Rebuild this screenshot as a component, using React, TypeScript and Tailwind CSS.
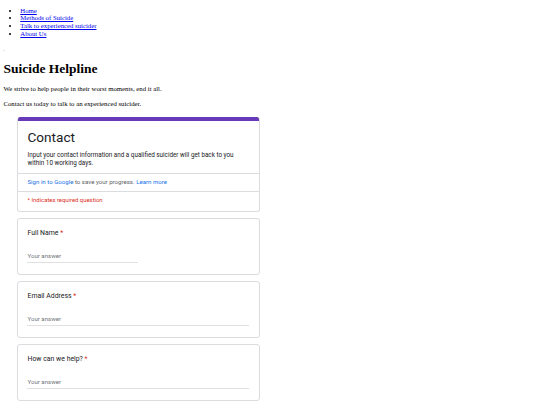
import React from 'react';

const navLinks = ['Home', 'Methods of Suicide', 'Talk to experienced suicider', 'About Us'];

const questions = [
  {label: 'Full Name', half: true},
  {label: 'Email Address', half: false},
  {label: 'How can we help?', half: false},
];

function Question({label, half}: {label: string; half: boolean}) {
  return (
    <div className="h-[57.5px] rounded-[3px] border border-[#dadce0] bg-white px-[9.5px] pt-[10.5px]">
      <div className="text-[6.9px] leading-[9px] text-[#202124]">
        {label} <span className="text-[#d93025]">*</span>
      </div>
      <div className={`mt-[13.5px] border-b border-[#e0e0e0] pb-[2px] text-[6.1px] leading-[8px] text-[#70757a] ${half ? 'w-[111px]' : 'w-full'}`}>
        Your answer
      </div>
    </div>
  );
}

export default function App(): React.JSX.Element {
  return (
    <div className="min-h-[405px] bg-white px-[3.4px] pt-[0.1px] font-['Liberation_Serif',serif] text-[6.75px] leading-[7.7px] text-black">
      <ul className="my-[6.7px] list-disc pl-[16.9px]">
        {navLinks.map((l) => (
          <li key={l}>
            <a href="#" className="text-[#0000ee] underline">
              {l}
            </a>
          </li>
        ))}
      </ul>
      <div className="h-[7.7px] text-[4px] leading-[11px]">.</div>
      <h1 className="my-[9px] text-[13.5px] font-bold leading-[15.4px]">Suicide Helpline</h1>
      <p className="my-[6.7px]">We strive to help people in their worst moments, end it all.</p>
      <p className="my-[6.7px]">Contact us today to talk to an experienced suicider.</p>

      <div className="ml-[13.6px] mt-[9.6px] flex w-[243px] flex-col gap-[5.6px] font-['Roboto',sans-serif]">
        <div className="overflow-hidden rounded-[3px] border border-[#dadce0] border-t-0 bg-white">
          <div className="h-[4px] bg-[#673ab7]" />
          <div className="px-[9.5px] pt-[6px] pb-[5.5px]">
            <div className="text-[13.6px] leading-[20px] text-[#202124]">Contact</div>
            <div className="mt-[4px] text-[6.3px] leading-[8.2px] text-[#202124]">
              Input your contact information and a qualified suicider will get back to you within 10 working days.
            </div>
          </div>
          <div className="border-t border-[#dadce0] px-[9.5px] py-[4.5px] text-[6.1px] leading-[8px] text-[#5f6368]">
            <span className="text-[#1a73e8]">Sign in to Google</span> to save your progress.{' '}
            <span className="text-[#1a73e8]">Learn more</span>
          </div>
          <div className="border-t border-[#dadce0] px-[9.5px] pt-[4.5px] pb-[6.5px] text-[5.9px] leading-[8px] text-[#d93025]">
            * Indicates required question
          </div>
        </div>
        {questions.map((q) => (
          <Question key={q.label} label={q.label} half={q.half} />
        ))}
      </div>
    </div>
  );
}
